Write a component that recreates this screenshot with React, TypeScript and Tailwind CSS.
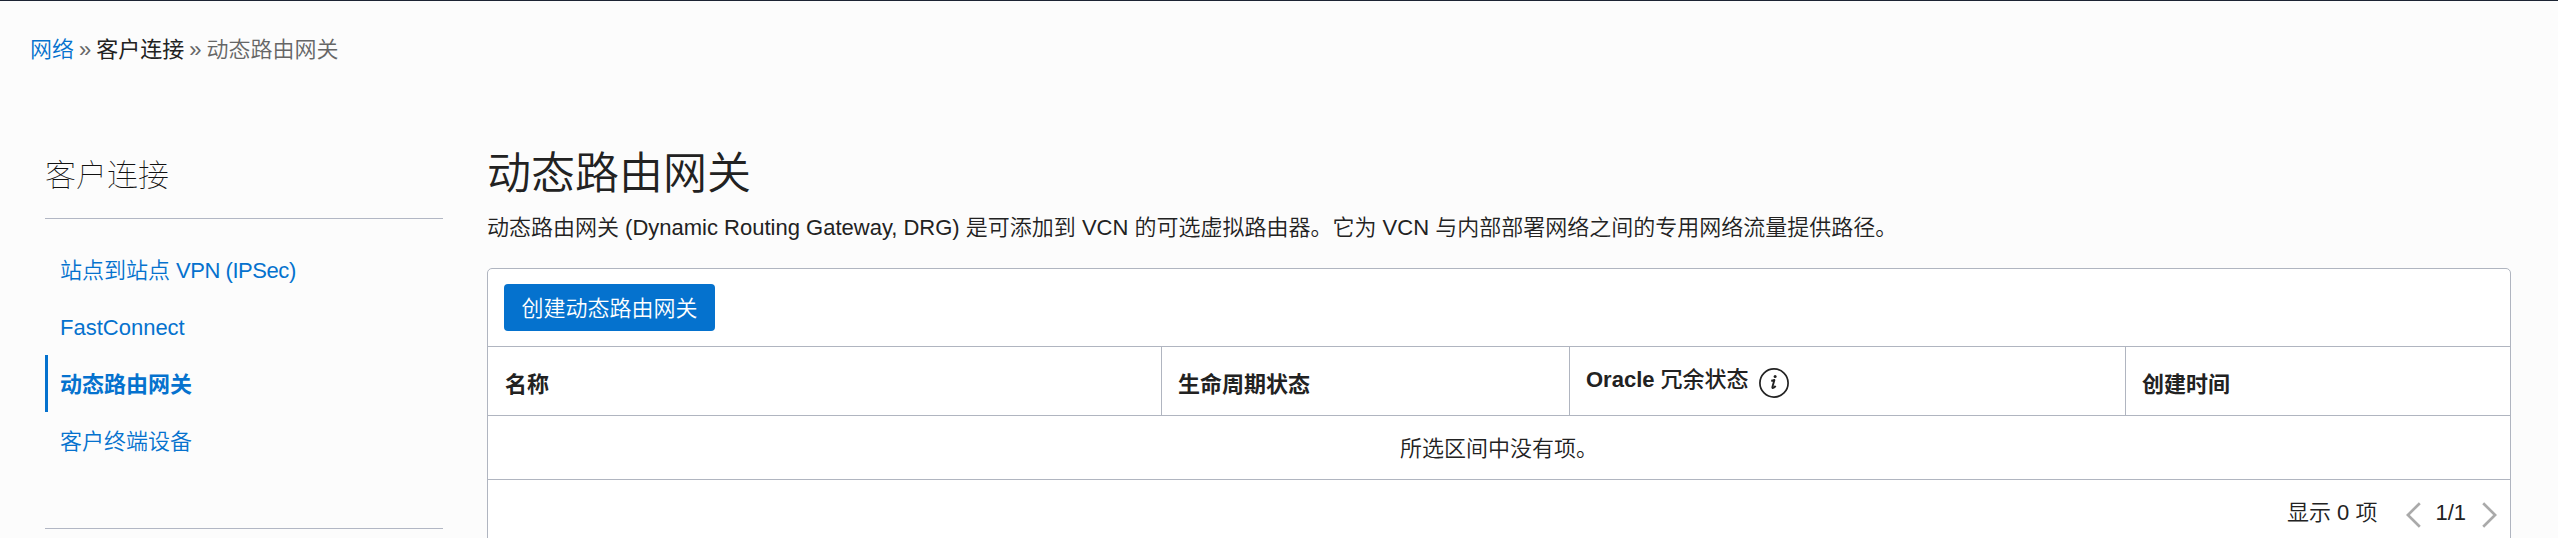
import React from 'react';

const navItems = [
  { label: '站点到站点', suffix: 'VPN (IPSec)', active: false },
  { label: 'FastConnect', suffix: '', active: false },
  { label: '动态路由网关', suffix: '', active: true },
  { label: '客户终端设备', suffix: '', active: false },
];

function InfoIcon() {
  return (
    <svg className="mt-[11px] ml-[10px] size-[30px] shrink-0" viewBox="0 0 30 30" fill="none">
      <circle cx="15" cy="15" r="14.1" stroke="#222" strokeWidth="1.7" />
      <circle cx="16.1" cy="8.6" r="1.5" fill="#222" />
      <path
        d="M12.2 12.700c1.200-.1 2.200-.3 3.200-.7l-2 6.900c-.3 1.200.3 1.500 1.200.9.800-.5 1.400-1.100 2-1.900"
        stroke="#222"
        strokeWidth="1.900"
        strokeLinejoin="round"
      />
    </svg>
  );
}

function Chevron({ direction }: { direction: 'left' | 'right' }) {
  return (
    <svg className="mt-[3px] h-[26px] w-[15px] shrink-0" viewBox="0 0 15 26" fill="none">
      <path
        d={direction === 'left' ? 'M13.800 1.200 1.900 13l11.900 11.800' : 'M1.200 1.200 13.100 13l-11.900 11.800'}
        stroke="#aaa"
        strokeWidth="2.700"
      />
    </svg>
  );
}

function Sidebar() {
  return (
    <aside className="w-[398px] shrink-0">
      <h2 className="h-[68px] pt-[3px] text-[31px] leading-[46px] font-thin text-[#111]">客户连接</h2>
      <nav className="flex h-[311px] flex-col border-y border-[#b2b7c4] pt-[22px]">
        {navItems.map((item) => (
          <a
            key={item.label}
            href="#"
            className={
              item.active
                ? 'flex h-[57px] items-center border-l-[3px] border-[#0572ce] pt-[2px] pl-3 font-bold text-[#0572ce]'
                : 'flex h-[57px] items-center pt-[2px] pl-[15px] text-[#0572ce]'
            }
          >
            {item.label}
            {item.suffix && <span className="ml-[6px] tracking-[-0.45px]">{item.suffix}</span>}
          </a>
        ))}
      </nav>
    </aside>
  );
}

export default function App() {
  return (
    <div className="flex h-[538px] w-full flex-col overflow-hidden border-t border-[#1c2433] bg-[#fcfcfc] font-['Liberation_Sans','Noto_Sans_CJK_SC',sans-serif] text-[22px] leading-[32px] font-[350] text-[#222]">
      <div className="flex h-[149px] shrink-0 items-start gap-[5px] pt-[33px] pl-[30px] whitespace-nowrap">
        <a href="#" className="text-[#0572ce]">网络</a>
        <span className="text-[#666]">»</span>
        <span className="font-normal">客户连接</span>
        <span className="text-[#666]">»</span>
        <span className="text-[#666]">动态路由网关</span>
      </div>
      <div className="flex shrink-0 pr-[47px] pl-[45px]">
        <Sidebar />
        <main className="ml-11 min-w-0 flex-1">
          <h1 className="-mt-[8px] h-[70px] text-[44px] leading-[64px]">动态路由网关</h1>
          <p className="h-[56px] whitespace-nowrap">
            动态路由网关 (Dynamic Routing Gateway, DRG) 是可添加到 VCN 的可选虚拟路由器。它为 VCN 与内部部署网络之间的专用网络流量提供路径。
          </p>
          <section className="h-[300px] rounded-t-[5px] border border-[#b0b5c0] bg-white">
            <div className="flex h-[77px] items-start pt-[15px] pl-4">
              <button className="h-[47px] w-[211px] rounded-[4px] bg-[#0572ce] pt-[2px] text-center font-[350] text-white">
                创建动态路由网关
              </button>
            </div>
            <div className="flex h-[70px] border-y border-[#b0b5c0] font-bold">
              <div className="flex w-[673px] items-center pt-2 pl-[17px]">名称</div>
              <div className="flex w-[408px] items-center border-l border-[#b0b5c0] pt-2 pl-4">生命周期状态</div>
              <div className="flex w-[556px] items-start border-l border-[#b0b5c0] pt-[10px] pl-4">
                <span className="mt-[7px]">
                  Oracle <span className="font-medium">冗余状态</span>
                </span>
                <InfoIcon />
              </div>
              <div className="flex flex-1 items-center border-l border-[#b0b5c0] pt-2 pl-4">创建时间</div>
            </div>
            <div className="flex h-[64px] items-center justify-center border-b border-[#b0b5c0] pt-[2px]">
              所选区间中没有项。
            </div>
            <div className="flex h-[66px] items-center justify-end pr-[13px]">
              <span>显示 0 项</span>
              <span className="ml-[29px] flex items-center">
                <Chevron direction="left" />
                <span className="mr-[16px] ml-[14px]">1/1</span>
                <Chevron direction="right" />
              </span>
            </div>
          </section>
        </main>
      </div>
    </div>
  );
}
